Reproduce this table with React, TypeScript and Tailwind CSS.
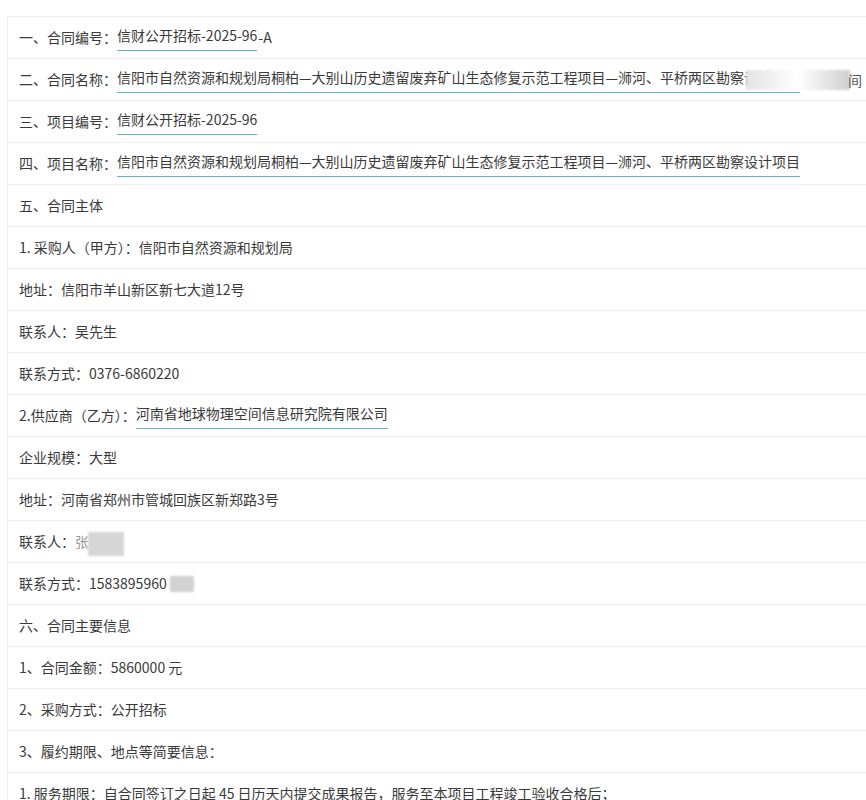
import React from "react";

const ROW_FONT = {
  fontFamily: '"Microsoft YaHei", "Noto Sans CJK SC", "Noto Sans", sans-serif',
};

function Link({ children }: { children: React.ReactNode }) {
  return (
    <span className="border-b border-[#62b7c4] pb-[4px]">{children}</span>
  );
}

function Row({ children }: { children: React.ReactNode }) {
  return (
    <div className="relative flex h-[42px] items-center whitespace-nowrap border-b border-[#ebeef2] pl-[11px] text-[14px] text-[#3a3a3a]">
      {children}
    </div>
  );
}

const NAME =
  "信阳市自然资源和规划局桐柏—大别山历史遗留废弃矿山生态修复示范工程项目—浉河、平桥两区勘察设计项目";

export default function App() {
  return (
    <div className="min-h-[800px] bg-white pt-4 pl-[7px]" style={ROW_FONT}>
      <div className="overflow-hidden border-t border-l border-[#ebeef2]">
        <Row>
          一、合同编号：<Link>信财公开招标-2025-96</Link>
          <span className="ml-px">-A</span>
        </Row>
        <Row>
          二、合同名称：<Link>{NAME}</Link>
          {/* 打码遮挡 */}
          <span className="absolute left-[738px] top-[11px] h-[20px] w-[104px] bg-gradient-to-r from-[#e4e4e4] via-white to-[#cfcfcf] blur-[1px]" />
          <span className="absolute left-[840px] top-[11px] text-[#555]">间</span>
        </Row>
        <Row>
          三、项目编号：<Link>信财公开招标-2025-96</Link>
        </Row>
        <Row>
          四、项目名称：<Link>{NAME}</Link>
        </Row>
        <Row>五、合同主体</Row>
        <Row>1. 采购人（甲方）：信阳市自然资源和规划局</Row>
        <Row>地址：信阳市羊山新区新七大道12号</Row>
        <Row>联系人：吴先生</Row>
        <Row>联系方式：0376-6860220</Row>
        <Row>
          2.供应商（乙方）：<Link>河南省地球物理空间信息研究院有限公司</Link>
        </Row>
        <Row>企业规模：大型</Row>
        <Row>地址：河南省郑州市管城回族区新郑路3号</Row>
        <Row>
          联系人：<span className="text-[#999]">张</span>
          <span className="absolute left-[80px] top-[11px] h-[24px] w-[36px] bg-[#d6d6d6] blur-[1px]" />
        </Row>
        <Row>
          联系方式：1583895960
          <span className="absolute left-[162px] top-[13px] h-[16px] w-[24px] bg-[#d2d2d2] blur-[1px]" />
        </Row>
        <Row>六、合同主要信息</Row>
        <Row>1、合同金额：5860000 元</Row>
        <Row>2、采购方式：公开招标</Row>
        <Row>3、履约期限、地点等简要信息：</Row>
        <Row>
          1. 服务期限：自合同签订之日起 45 日历天内提交成果报告，服务至本项目工程竣工验收合格后；
        </Row>
      </div>
    </div>
  );
}
